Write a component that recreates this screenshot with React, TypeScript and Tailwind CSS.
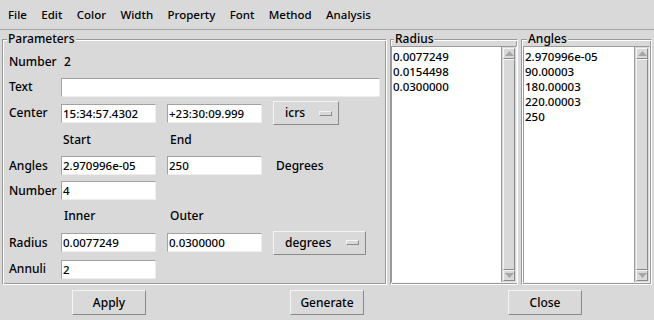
import React from "react";

// Tk-like panda annulus dialog

const menus = ["File", "Edit", "Color", "Width", "Property", "Font", "Method", "Analysis"];

const groove =
  "border border-t-[#9a9a9a] border-l-[#9a9a9a] border-b-white border-r-white shadow-[inset_1px_1px_0_#ffffff,inset_-1px_-1px_0_#9a9a9a]";

const raised = "border border-t-[#f4f4f4] border-l-[#f4f4f4] border-b-[#8a8a8a] border-r-[#8a8a8a]";

const Entry: React.FC<{ value?: string; wide?: boolean }> = ({ value = "", wide }) => (
  <div
    className={`${wide ? "w-[319px]" : "w-[95px]"} h-[19px] bg-white border border-t-[#a2a2a2] border-l-[#a2a2a2] border-b-[#ededed] border-r-[#ededed] pl-[1px] leading-[17px] text-[11.5px] whitespace-nowrap`}
  >
    {value}
  </div>
);

const OptionMenu: React.FC<{ label: string; wide?: boolean }> = ({ label, wide }) => (
  <div
    className={`${wide ? "w-[93px]" : "w-[66px]"} h-[24px] flex items-center justify-between pl-[11px] pr-[6px] ${raised}`}
  >
    <span>{label}</span>
    <span className={`w-[13px] h-[5px] ${raised}`} />
  </div>
);

const Row: React.FC<{ h: string; children: React.ReactNode }> = ({ h, children }) => (
  <div className={`flex items-center ${h}`}>{children}</div>
);

const Label: React.FC<{ children?: React.ReactNode }> = ({ children }) => (
  <div className="w-[52px] shrink-0">{children}</div>
);

const Arrow: React.FC<{ down?: boolean }> = ({ down }) => (
  <div className={`h-[11px] flex items-center justify-center ${raised}`}>
    <svg width="9" height="5" viewBox="0 0 9 5">
      {down ? <polygon points="0,0 9,0 4.5,5" fill="#a6a6a6" /> : <polygon points="0,5 9,5 4.5,0" fill="#a6a6a6" />}
    </svg>
  </div>
);

const ListBox: React.FC<{ items: string[] }> = ({ items }) => (
  <div className="flex-1 flex border border-t-[#9a9a9a] border-l-[#9a9a9a] border-b-[#f2f2f2] border-r-[#f2f2f2]">
    <div className="flex-1 bg-white pl-[1px] pt-[2px] text-[11.5px] leading-[15px]">
      {items.map((it) => (
        <div key={it}>{it}</div>
      ))}
    </div>
    <div className="w-[15px] flex flex-col p-[1px] border-l border-[#9a9a9a] bg-[#d9d9d9]">
      <Arrow />
      <div className={`flex-1 ${raised}`} />
      <Arrow down />
    </div>
  </div>
);

const Frame: React.FC<{ title: string; className: string; legend: string; children: React.ReactNode }> = ({
  title,
  className,
  legend,
  children,
}) => (
  <fieldset className={`${groove} ${className} min-w-0 h-[253px] flex flex-col`}>
    <legend className={`${legend} px-[1px] leading-[14px] bg-[#d9d9d9]`}>{title}</legend>
    {children}
  </fieldset>
);

export default function App() {
  return (
    <div className="w-[654px] h-[320px] bg-[#d9d9d9] text-black text-[12px] font-medium font-['Noto_Sans',sans-serif] overflow-hidden">
      {/* Menubar */}
      <div className="h-[30px] flex items-center gap-[14.4px] pl-[8px] border-b border-[#a6a6a6] text-[11.5px]">
        {menus.map((m) => (
          <span key={m}>{m}</span>
        ))}
      </div>

      <div className="flex gap-[3px] px-[2px] pt-[2px]">
        {/* Parameters */}
        <Frame title="Parameters" legend="-ml-[2px]" className="w-[385px] pl-[6px] pt-[3px]">
          <Row h="h-[25px]">
            <Label>Number</Label>
            <span className="pl-[3px]">2</span>
          </Row>
          <Row h="h-[26px]">
            <Label>Text</Label>
            <Entry wide />
          </Row>
          <Row h="h-[26px]">
            <Label>Center</Label>
            <Entry value="15:34:57.4302" />
            <div className="ml-[11px]">
              <Entry value="+23:30:09.999" />
            </div>
            <div className="ml-[11px]">
              <OptionMenu label="icrs" />
            </div>
          </Row>
          <Row h="h-[27px]">
            <Label />
            <div className="w-[95px] pl-[2px]">Start</div>
            <div className="ml-[11px] pl-[3px]">End</div>
          </Row>
          <Row h="h-[25px]">
            <Label>Angles</Label>
            <Entry value="2.970996e-05" />
            <div className="ml-[11px]">
              <Entry value="250" />
            </div>
            <div className="ml-[11px] pl-[3px]">Degrees</div>
          </Row>
          <Row h="h-[25px]">
            <Label>Number</Label>
            <Entry value="4" />
          </Row>
          <Row h="h-[26px]">
            <Label />
            <div className="w-[95px] pl-[3px]">Inner</div>
            <div className="ml-[11px] pl-[3px]">Outer</div>
          </Row>
          <Row h="h-[27px]">
            <Label>Radius</Label>
            <Entry value="0.0077249" />
            <div className="ml-[11px]">
              <Entry value="0.0300000" />
            </div>
            <div className="ml-[11px]">
              <OptionMenu label="degrees" wide />
            </div>
          </Row>
          <Row h="h-[26px]">
            <Label>Annuli</Label>
            <Entry value="2" />
          </Row>
        </Frame>

        {/* Radius list */}
        <Frame title="Radius" legend="ml-[3px]" className="w-[128px] px-0 pb-[1px]">
          <ListBox items={["0.0077249", "0.0154498", "0.0300000"]} />
        </Frame>

        {/* Angles list */}
        <Frame title="Angles" legend="ml-[4px]" className="flex-1 px-[1px] pb-[1px]">
          <ListBox items={["2.970996e-05", "90.00003", "180.00003", "220.00003", "250"]} />
        </Frame>
      </div>

      {/* Buttons */}
      <div className="grid grid-cols-3 justify-items-center mt-[5px]">
        {["Apply", "Generate", "Close"].map((b) => (
          <div key={b} className={`w-[74px] h-[25px] flex items-center justify-center ${raised}`}>
            {b}
          </div>
        ))}
      </div>
    </div>
  );
}
